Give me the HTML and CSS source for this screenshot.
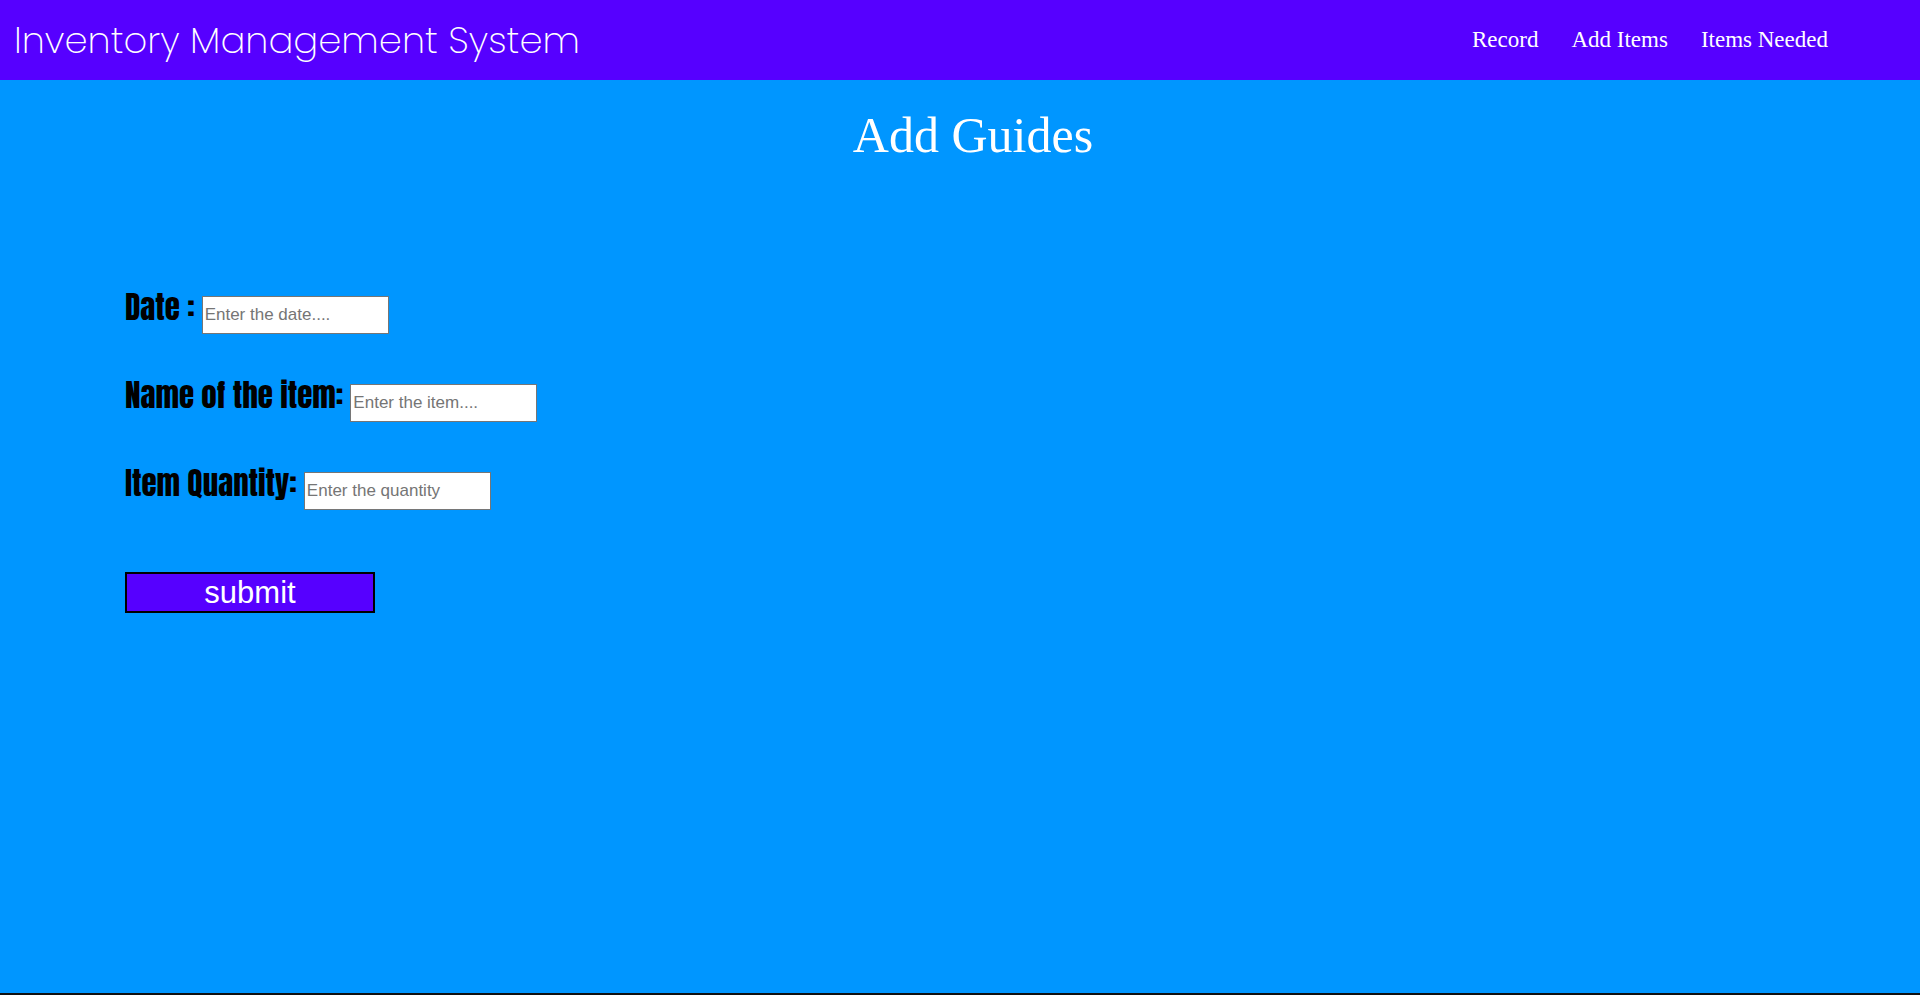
FILE: index.html
```html
<!DOCTYPE html>
<html lang="en">
<head>
<meta charset="utf-8">
<title>Inventory Management System</title>
<link rel="stylesheet" href="styles.css">
</head>
<body>
<header class="navbar">
  <div class="brand">Inventory Management System</div>
  <nav class="links">
    <a href="#record">Record</a>
    <a href="#add">Add Items</a>
    <a href="#needed">Items Needed</a>
  </nav>
</header>
<main class="page">
  <h1 class="title">Add Guides</h1>
  <form class="form">
    <div class="field">
      <label for="date">Date :</label>
      <input id="date" type="text" placeholder="Enter the date....">
    </div>
    <div class="field">
      <label for="item">Name of the item:</label>
      <input id="item" type="text" placeholder="Enter the item....">
    </div>
    <div class="field">
      <label for="quantity">Item Quantity:</label>
      <input id="quantity" type="text" placeholder="Enter the quantity">
    </div>
    <button class="submit" type="submit">submit</button>
  </form>
</main>
</body>
</html>
```
FILE: styles.css
```css
* {
  box-sizing: border-box;
}

body {
  margin: 0;
  min-height: 100vh;
  display: flex;
  flex-direction: column;
  background: #0096ff;
  border-bottom: 2px solid #111;
  font-family: "Times New Roman", "Liberation Serif", serif;
}

.navbar {
  display: flex;
  align-items: center;
  justify-content: space-between;
  height: 80px;
  padding: 0 92px 0 14px;
  background: #5600ff;
  color: #fff;
}

.brand {
  font-family: "Poppins ExtraLight", Poppins, Inter, sans-serif;
  font-size: 37px;
  font-weight: 275;
}

.links {
  display: flex;
  gap: 33px;
  font-size: 23px;
}

.links a {
  color: #fff;
  text-decoration: none;
}

.title {
  margin: 25px 0 0 26px;
  color: #fff;
  font-size: 50px;
  font-weight: 400;
  line-height: 60px;
  text-align: center;
}

.form {
  display: flex;
  flex-direction: column;
  align-items: flex-start;
  gap: 45px;
  padding: 126px 125px 0;
}

.field {
  display: flex;
  align-items: baseline;
  gap: 7px;
}

.field label {
  color: #000;
  font-family: Impact, Anton, "Liberation Sans Narrow", sans-serif;
  font-size: 31px;
  font-weight: 400;
  line-height: 32px;
}

.field input {
  width: 187px;
  height: 38px;
  padding: 1px 2px;
  border: 1px solid #767676;
  background: #fff;
  font-family: Arial, "Liberation Sans", sans-serif;
  font-size: 17px;
}

.field input::placeholder {
  color: #757575;
}

.submit {
  width: 250px;
  height: 41px;
  margin-top: 17px;
  padding: 0;
  border: 2px solid #000;
  background: #5600ff;
  color: #fff;
  font-family: Arial, "Liberation Sans", sans-serif;
  font-size: 31px;
  line-height: 36px;
}
```
